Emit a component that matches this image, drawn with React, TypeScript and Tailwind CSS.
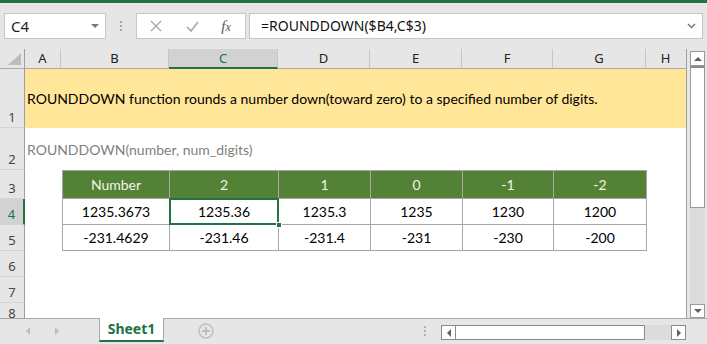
import React from "react";

const CELL_FONT = { fontFamily: "Lato, 'Open Sans', sans-serif" };
const UI_FONT = { fontFamily: "'Noto Sans', 'Open Sans', sans-serif" };

const colWidths = [37, 108, 109, 92, 92, 91, 93, 39];
const colNames = ["A", "B", "C", "D", "E", "F", "G", "H"];

function RowHeader({ n, h, selected, clip }: { n: string; h: number; selected?: boolean; clip?: number }) {
  const inner = (
    <div
      className={
        "w-[25px] shrink-0 flex items-end justify-center pb-[1px] text-[13px] leading-none border-b border-b-[#d4d4d4] " +
        (selected
          ? "bg-[#d2d2d2] text-[#217346] border-r-2 border-r-[#217346]"
          : "bg-[#e6e6e6] text-[#444] border-r border-r-[#9e9e9e]")
      }
      style={{ ...UI_FONT, height: h }}
    >
      <span className="mb-[2px]">{n}</span>
    </div>
  );
  if (clip) {
    return (
      <div className="w-[25px] shrink-0 overflow-hidden" style={{ height: clip }}>
        {inner}
      </div>
    );
  }
  return inner;
}

function Cell({
  w,
  children,
  header,
  selected,
}: {
  w: number;
  children: React.ReactNode;
  header?: boolean;
  selected?: boolean;
}) {
  return (
    <div
      className={
        "relative shrink-0 flex items-center justify-center border-r border-b border-[#a6a6a6] text-[14px] " +
        (header ? "bg-[#538135] text-[#f3f3ea]" : "bg-white text-black") +
        (selected ? " z-10" : "")
      }
      style={{ ...CELL_FONT, width: w }}
    >
      {children}
      {selected && (
        <>
          <div className="absolute left-[-1px] top-[-1px] right-[-1px] bottom-[-1px] border-2 border-[#217346]" />
          <div className="absolute right-[-4px] bottom-[-4px] w-[6px] h-[6px] bg-[#217346] border border-white" />
        </>
      )}
    </div>
  );
}

function TableRow({
  h,
  cells,
  header,
  first,
  selIndex,
}: {
  h: number;
  cells: string[];
  header?: boolean;
  first?: boolean;
  selIndex?: number;
}) {
  const ws = [108, 109, 92, 92, 91, 93];
  return (
    <div className="flex" style={{ height: h }}>
      <div className="w-[37px] shrink-0" />
      <div className={"flex border-l border-[#a6a6a6] " + (first ? "border-t" : "")}>
        {cells.map((c, i) => (
          <Cell key={i} w={i === 0 ? ws[i] - 1 : ws[i]} header={header} selected={selIndex === i}>
            {c}
          </Cell>
        ))}
      </div>
    </div>
  );
}

function Triangle({ dir, color = "#555", size = 4 }: { dir: "up" | "down" | "left" | "right"; color?: string; size?: number }) {
  const s = size;
  let pts = "";
  if (dir === "up") pts = `0,${s} ${s * 2},${s} ${s},0`;
  if (dir === "down") pts = `0,0 ${s * 2},0 ${s},${s}`;
  if (dir === "left") pts = `${s},0 ${s},${s * 2} 0,${s}`;
  if (dir === "right") pts = `0,0 0,${s * 2} ${s},${s}`;
  const w = dir === "up" || dir === "down" ? s * 2 : s;
  const hh = dir === "up" || dir === "down" ? s : s * 2;
  return (
    <svg width={w} height={hh} viewBox={`0 0 ${w} ${hh}`}>
      <polygon points={pts} fill={color} />
    </svg>
  );
}

export default function App() {
  return (
    <div className="w-[707px] h-[344px] overflow-hidden flex flex-col bg-white select-none">
      {/* top green strip */}
      <div className="h-[3px] bg-[#217346] shrink-0" />

      {/* formula toolbar */}
      <div className="h-[46px] shrink-0 bg-[#e6e6e6] flex items-start pt-[10px]">
        <div className="ml-[4px] w-[102px] h-[26px] bg-white border border-[#c6c6c6] flex items-center justify-between pl-[6px] pr-[6px]">
          <span className="text-[15px] text-[#222] leading-none" style={UI_FONT}>
            C4
          </span>
          <Triangle dir="down" color="#7a7a7a" size={4} />
        </div>
        <div className="w-[30px] h-[26px] flex flex-col items-center justify-center gap-[2px]">
          <div className="w-[2px] h-[2px] bg-[#a8a8a8]" />
          <div className="w-[2px] h-[2px] bg-[#a8a8a8]" />
          <div className="w-[2px] h-[2px] bg-[#a8a8a8]" />
        </div>
        <div className="w-[110px] h-[26px] bg-white border border-[#c6c6c6] flex items-center">
          <div className="w-[38px] flex justify-center">
            <svg width="12" height="12" viewBox="0 0 12 12">
              <path d="M1 1 L11 11 M11 1 L1 11" stroke="#a6a6a6" strokeWidth="1.3" />
            </svg>
          </div>
          <div className="w-[34px] flex justify-center">
            <svg width="13" height="11" viewBox="0 0 13 11">
              <path d="M1 6 L5 10 L12 1" stroke="#a6a6a6" strokeWidth="1.6" fill="none" />
            </svg>
          </div>
          <div className="w-[34px] flex justify-center">
            <span
              className="italic text-[15px] text-[#555] leading-none"
              style={{ fontFamily: "'Liberation Serif', 'DejaVu Serif', serif" }}
            >
              f<span className="text-[12px]">x</span>
            </span>
          </div>
        </div>
        <div className="ml-[3px] w-[454px] h-[26px] bg-white border border-[#c6c6c6] flex items-center justify-between pl-[11px] pr-[6px]">
          <span className="text-[14px] text-[#111] leading-none" style={UI_FONT}>
            =ROUNDDOWN($B4,C$3)
          </span>
          <svg width="9" height="6" viewBox="0 0 9 6">
            <path d="M1 1 L4.5 4.5 L8 1" stroke="#777" strokeWidth="1.5" fill="none" />
          </svg>
        </div>
      </div>

      {/* main grid area */}
      <div className="h-[269px] shrink-0 flex">
        <div className="w-[686px] shrink-0 flex flex-col bg-white">
          {/* column headers */}
          <div className="h-[20px] flex bg-[#e6e6e6] border-b border-[#ababab]">
            <div className="w-[25px] shrink-0 border-r border-[#9e9e9e] flex items-end justify-end pr-[3px] pb-[3px]">
              <svg width="13" height="12" viewBox="0 0 13 12">
                <polygon points="13,0 13,12 0,12" fill="#bcbcbc" />
              </svg>
            </div>
            {colNames.map((n, i) => (
              <div
                key={n}
                className={
                  "shrink-0 flex items-center justify-center text-[13px] leading-none " +
                  (n === "C"
                    ? "bg-[#d2d2d2] text-[#217346] border-b-2 border-[#217346] mb-[-1px] border-r border-r-[#c6c6c6]"
                    : "text-[#222] " + (i < colNames.length - 1 ? "border-r border-[#c6c6c6]" : ""))
                }
                style={{ ...UI_FONT, width: i === 0 ? colWidths[i] - 1 : colWidths[i] }}
              >
                {n}
              </div>
            ))}
          </div>

          {/* row 1 */}
          <div className="flex">
            <RowHeader n="1" h={59} />
            <div className="flex-1 bg-[#ffe699] flex items-center pl-[2px] text-[14px] text-black" style={CELL_FONT}>
              ROUNDDOWN function rounds a number down(toward zero) to a specified number of digits.
            </div>
          </div>

          {/* row 2 */}
          <div className="flex">
            <RowHeader n="2" h={42} />
            <div className="flex-1 flex items-center pl-[2px] text-[14px] text-[#7f7f7f]" style={CELL_FONT}>
              ROUNDDOWN(number, num_digits)
            </div>
          </div>

          {/* row 3 */}
          <div className="flex">
            <RowHeader n="3" h={29} />
            <TableRow h={29} header first cells={["Number", "2", "1", "0", "-1", "-2"]} />
          </div>
          {/* row 4 */}
          <div className="flex">
            <RowHeader n="4" h={26} selected />
            <TableRow h={26} selIndex={1} cells={["1235.3673", "1235.36", "1235.3", "1235", "1230", "1200"]} />
          </div>
          {/* row 5 */}
          <div className="flex">
            <RowHeader n="5" h={26} />
            <TableRow h={26} cells={["-231.4629", "-231.46", "-231.4", "-231", "-230", "-200"]} />
          </div>
          <div className="flex">
            <RowHeader n="6" h={26} />
          </div>
          <div className="flex">
            <RowHeader n="7" h={26} />
          </div>
          <div className="flex">
            <RowHeader n="8" h={21} clip={15} />
          </div>
        </div>

        {/* vertical scrollbar */}
        <div className="w-[21px] shrink-0 bg-[#e6e6e6] border-l border-[#a0a0a0] flex flex-col pl-[3px] pr-[2px] pt-[2px]">
          <div className="h-[15px] w-[15px] border border-[#9a9a9a] bg-white flex items-center justify-center">
            <Triangle dir="up" color="#606060" size={4} />
          </div>
          <div className="h-[142px] w-[15px] border border-[#9a9a9a] border-t-2 border-t-[#8a8a8a] bg-white" />
          <div className="flex-1 w-[15px] bg-[#dcdcdc]" />
          <div className="h-[14px] w-[15px] border border-[#9a9a9a] bg-white flex items-center justify-center">
            <Triangle dir="down" color="#606060" size={4} />
          </div>
        </div>
      </div>

      {/* sheet tab bar */}
      <div className="h-[26px] shrink-0 bg-[#e6e6e6] border-t border-[#a8a8a8] flex items-start">
        <div className="w-[99px] shrink-0 h-[24px] flex items-center">
          <div className="ml-[26px]">
            <Triangle dir="left" color="#bdbdbd" size={4} />
          </div>
          <div className="ml-[25px]">
            <Triangle dir="right" color="#bdbdbd" size={4} />
          </div>
        </div>
        <div className="w-[65px] shrink-0 h-[24px] mt-[-1px] bg-white border-l border-r border-[#a8a8a8] border-b-2 border-b-[#217346] flex items-center justify-center">
          <span className="text-[14px] font-bold text-[#217346] leading-none" style={UI_FONT}>
            Sheet1
          </span>
        </div>
        <div className="w-[277px] shrink-0 h-[24px] flex items-center">
          <div className="ml-[34px]">
            <svg width="16" height="16" viewBox="0 0 16 16">
              <circle cx="8" cy="8" r="7" stroke="#bfbfbf" strokeWidth="1.5" fill="none" />
              <path d="M8 4 V12 M4 8 H12" stroke="#bfbfbf" strokeWidth="1.8" />
            </svg>
          </div>
          <div className="ml-[210px] flex flex-col gap-[2px]">
            <div className="w-[2px] h-[2px] bg-[#b0b0b0]" />
            <div className="w-[2px] h-[2px] bg-[#b0b0b0]" />
            <div className="w-[2px] h-[2px] bg-[#b0b0b0]" />
          </div>
        </div>
        <div className="w-[245px] shrink-0 h-[15px] mt-[6px] flex">
          <div className="w-[15px] h-[15px] border border-[#8a8a8a] bg-white flex items-center justify-center">
            <Triangle dir="left" color="#606060" size={4} />
          </div>
          <div className="w-[189px] h-[15px] border border-[#8a8a8a] border-l-0 bg-white" />
          <div className="flex-1 h-[15px] bg-[#dcdcdc]" />
          <div className="w-[15px] h-[15px] border border-[#8a8a8a] bg-white flex items-center justify-center">
            <Triangle dir="right" color="#606060" size={4} />
          </div>
        </div>
      </div>
    </div>
  );
}
